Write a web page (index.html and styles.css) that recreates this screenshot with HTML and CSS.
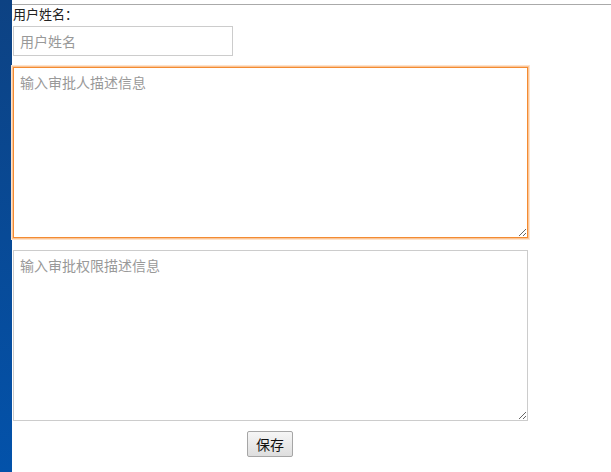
FILE: index.html
```html
<!DOCTYPE html>
<html lang="zh-CN">
<head>
<meta charset="utf-8">
<link rel="stylesheet" href="styles.css">
</head>
<body>
<div class="page">
  <div class="sidebar"></div>
  <div class="main">
    <form class="form">
      <label class="label" for="uname">用户姓名：</label>
      <input id="uname" class="field" type="text" placeholder="用户姓名">
      <textarea class="area area-focus" placeholder="输入审批人描述信息"></textarea>
      <textarea class="area" placeholder="输入审批权限描述信息"></textarea>
      <div class="actions"><button type="button" class="btn">保存</button></div>
    </form>
  </div>
</div>
</body>
</html>
```

FILE: styles.css
```css
html, body { margin: 0; padding: 0; background: #fff; }
body { font-family: "Noto Sans CJK SC", "Microsoft YaHei", sans-serif; color: #222; }
.page { display: flex; height: 472px; overflow: hidden; }
.sidebar { width: 12px; flex: none; background: linear-gradient(to bottom, #0d4283, #0352aa); }
.main { flex: 1; padding-top: 4px; }
.form { border-top: 1px solid #aaa; display: flex; flex-direction: column; align-items: flex-start; padding-left: 1px; }
.label { font-size: 13px; line-height: 16px; height: 16px; margin-top: 1px; }
.field { box-sizing: border-box; width: 220px; height: 30px; margin: 4px 0 0 0; border: 1px solid #ccc; padding: 0 6px; font-family: inherit; font-size: 14px; outline: none; }
.field::placeholder, .area::placeholder { color: #999; }
.area { box-sizing: border-box; width: 515px; height: 171px; border: 1px solid #ccc; padding: 4px 6px; font-family: inherit; font-size: 14px; line-height: 20px; resize: both; outline: none; margin: 0; }
.area-focus { margin-top: 11px; border-color: #f38b32; box-shadow: 0 0 0 1px #fbc597, 0 0 0 2px #fde3cc; }
.area + .area { margin-top: 12px; }
.actions { width: 515px; display: flex; justify-content: flex-start; padding-left: 234px; box-sizing: border-box; margin-top: 10px; }
.btn { width: 46px; height: 26px; padding: 0; font-family: inherit; font-size: 14px; color: #111; border: 1px solid #a6a6a6; border-radius: 2px; background: linear-gradient(#f6f6f6, #dedede); }
```
